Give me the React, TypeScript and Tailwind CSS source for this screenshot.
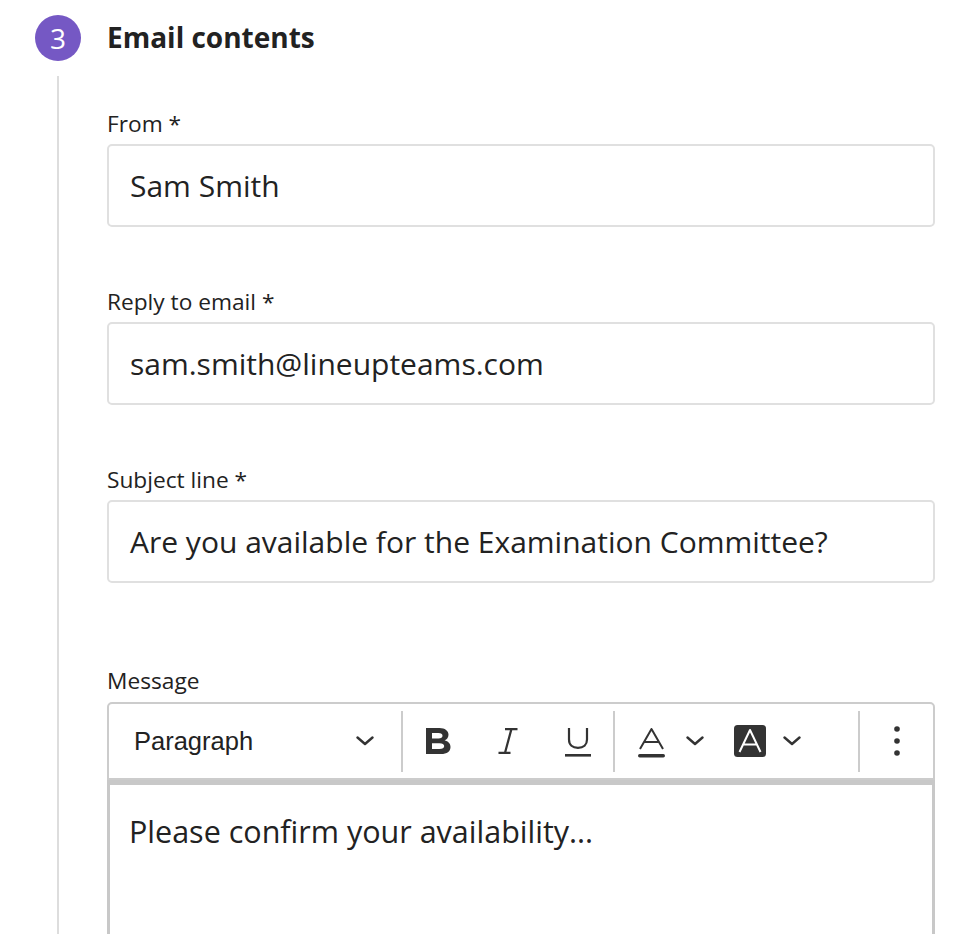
import React from 'react';

const Chevron: React.FC<{ className?: string }> = ({ className }) => (
  <svg className={className} width="18" height="10" viewBox="0 0 18 10" fill="none">
    <polyline points="1.5,1.5 9,8 16.5,1.5" stroke="#333" strokeWidth="2.4" strokeLinecap="round" strokeLinejoin="round" />
  </svg>
);

const BoldIcon = () => (
  <svg width="25" height="26" viewBox="0 0 25 26">
    <path
      fill="#333"
      fillRule="evenodd"
      d="M0 0H13.5C19 0 22.5 2.8 22.5 6.8C22.5 9.5 21 11.4 18.6 12.3C22 13.1 24.5 15.6 24.5 19C24.5 23.4 21 26 15 26H0Z M6 5V10.5H12.5C15 10.5 16.5 9.5 16.5 7.7C16.5 5.9 15 5 12.5 5Z M6 15.2V21H13.5C16.5 21 18.2 19.9 18.2 18.1C18.2 16.3 16.5 15.2 13.5 15.2Z"
    />
  </svg>
);

const ItalicIcon = () => (
  <svg width="20" height="26" viewBox="0 0 20 26" fill="none" stroke="#333" strokeWidth="2.2">
    <path d="M7 1.1H19.5M13.4 1.1L7 24.9M0.5 24.9H12.5" />
  </svg>
);

const UnderlineIcon = () => (
  <svg width="26" height="29" viewBox="0 0 26 29" fill="none">
    <path d="M4 0V11.5C4 16.8 7.5 19.8 13 19.8C18.5 19.8 22 16.8 22 11.5V0" stroke="#333" strokeWidth="2.2" />
    <rect x="0" y="26" width="26" height="2.6" fill="#333" />
  </svg>
);

const TextColorIcon = () => (
  <svg width="27" height="30" viewBox="0 0 27 30" fill="none">
    <path d="M2 21L13.5 1L25 21M6.5 14H20.5" stroke="#333" strokeWidth="2" strokeLinejoin="round" />
    <rect x="0" y="26" width="27" height="3.4" rx="1.7" fill="#333" />
  </svg>
);

const BgColorIcon = () => (
  <svg width="32" height="32" viewBox="0 0 32 32" fill="none">
    <rect x="0" y="0" width="32" height="32" rx="3.5" fill="#333" />
    <path d="M5.5 27L16 5L26.5 27M9.5 19.5H22.5" stroke="#fff" strokeWidth="2" strokeLinejoin="round" />
  </svg>
);

const DotsIcon = () => (
  <svg width="6" height="30" viewBox="0 0 6 30">
    <circle cx="3" cy="3" r="2.8" fill="#333" />
    <circle cx="3" cy="15" r="2.8" fill="#333" />
    <circle cx="3" cy="27" r="2.8" fill="#333" />
  </svg>
);

const Divider = () => <div className="w-[2px] h-[61px] bg-[#cccccc]" />;

const Field: React.FC<{ label: string; value: string; className?: string }> = ({ label, value, className }) => (
  <div className={className}>
    <label className="block text-[22.7px] leading-[28px] text-[#222]">{label}</label>
    <div className="mt-[6px] h-[83px] border-2 border-[#e0e0e0] rounded-[5px] flex items-center pl-[21px] text-[30px] text-[#222]">
      {value}
    </div>
  </div>
);

export default function App() {
  return (
    <div className="bg-white min-h-screen h-[934px] overflow-hidden" style={{ fontFamily: '"Open Sans", Lato, sans-serif' }}>
      <div className="flex pl-[35px] pt-[15px] h-full">
        <div className="flex flex-col items-center w-[46px]">
          <div className="w-[46px] h-[46px] rounded-full bg-[#7558c4] flex items-center justify-center text-white text-[28px] leading-none">
            3
          </div>
          <div className="mt-[15px] w-[2px] flex-1 bg-[#dddddd]" />
        </div>
        <div className="ml-[26px] w-[828px]">
          <div className="h-[44px] flex items-center">
            <h1 className="text-[28px] font-bold text-[#222]">Email contents</h1>
          </div>
          <Field className="mt-[51px]" label="From *" value="Sam Smith" />
          <Field className="mt-[61px]" label="Reply to email *" value="sam.smith@lineupteams.com" />
          <Field className="mt-[61px]" label="Subject line *" value="Are you available for the Examination Committee?" />

          <div className="mt-[84px]">
            <label className="block text-[22.7px] leading-[28px] text-[#222]">Message</label>
            <div className="mt-[7px] h-[78px] border-2 border-[#cccccc] rounded-t-[5px] flex items-center" style={{ fontFamily: '"Liberation Sans", Arial, sans-serif' }}>
              <div className="w-[292px] flex items-center justify-between pl-[25px] pr-[27px] text-[25.5px] text-[#222]">
                <span>Paragraph</span>
                <Chevron />
              </div>
              <Divider />
              <div className="w-[70px] flex justify-center"><BoldIcon /></div>
              <div className="w-[70px] flex justify-center"><ItalicIcon /></div>
              <div className="w-[70px] flex justify-center pt-[3px]"><UnderlineIcon /></div>
              <Divider />
              <div className="ml-[23px] flex items-center pt-[4px]"><TextColorIcon /></div>
              <Chevron className="ml-[21px]" />
              <div className="ml-[30px] flex items-center"><BgColorIcon /></div>
              <Chevron className="ml-[17px]" />
              <div className="ml-[57px]"><Divider /></div>
              <div className="ml-[34px] flex items-center"><DotsIcon /></div>
            </div>
            <div className="h-[200px] border-t-[5px] border-x-[3px] border-[#c8c8c8] pl-[19px] pt-[24px] text-[30.5px] text-[#222]">
              Please confirm your availability...
            </div>
          </div>
        </div>
      </div>
    </div>
  );
}
